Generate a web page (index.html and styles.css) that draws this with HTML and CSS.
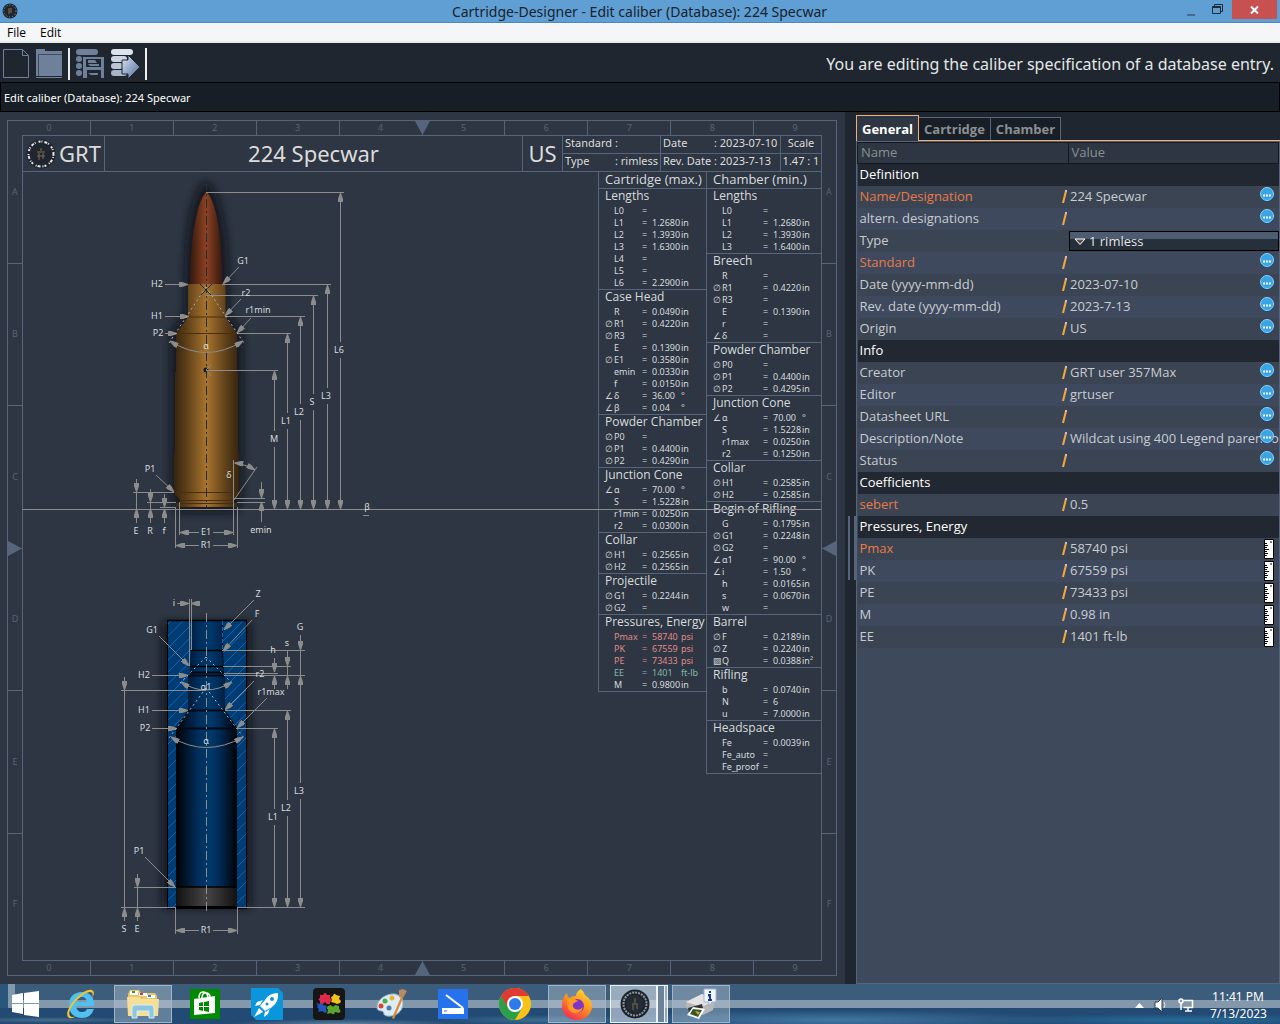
FILE: index.html
```
<!DOCTYPE html>
<html lang="en">
<head>
  <meta charset="UTF-8">
  <title>Cartridge-Designer - Edit caliber (Database): 224 Specwar</title>
  <link rel="stylesheet" href="styles.css">
</head>
<body>
  <header class="titlebar">
    <svg class="app-icon" width="16" height="16" viewBox="0 0 16 16"><circle cx="8" cy="8" r="7.5" fill="#20262e"/><circle cx="8" cy="8" r="6" fill="none" stroke="#9aa0a6" stroke-dasharray="1 2"/><path d="M6 6h4M7 7v4M9 7v3" stroke="#8b7558" fill="none"/></svg>
    <h1>Cartridge-Designer - Edit caliber (Database): 224 Specwar</h1>
    <div class="window-buttons">
      <button aria-label="Minimize"><svg width="10" height="12"><path d="M1 11h8" stroke="#46688a" stroke-width="2"/></svg></button>
      <button aria-label="Restore"><svg width="11" height="11"><path d="M.5 2.5h8v7h-8zM0 3.5h9M2.5 2V.5h8v7H9" fill="none" stroke="#222b35"/></svg></button>
      <button class="close" aria-label="Close"><svg width="9" height="8"><path d="M1 .5l7 7M8 .5l-7 7" stroke="#fff" stroke-width="2"/></svg></button>
    </div>
  </header>

  <nav class="menubar">
    <button>File</button>
    <button>Edit</button>
  </nav>

  <div class="toolbar">
    <button aria-label="New"><svg width="28" height="32"><path d="M1.500 1.500h19l6 6v22h-25zM20.500 1.500v6h6" fill="none" stroke="#6f809a"/></svg></button>
    <button aria-label="Open"><svg width="28" height="32"><path d="M1 1h9v2h17v25H1z" fill="#6f809a"/><path d="M3.500 28V6.500H27" fill="none" stroke="#3f4d60"/><path d="M1 29.500h26" stroke="#6f809a"/></svg></button>
    <i class="sep"></i>
    <button aria-label="Save to database"><svg width="30" height="32"><g fill="#6f809a"><rect x="1" y="1" width="22" height="6" rx="3"/><rect x="1" y="8" width="6" height="6" rx="3"/><rect x="1" y="15" width="6" height="6" rx="3"/><rect x="1" y="22" width="6" height="6" rx="3"/><path d="M8 9h21v21h-3v-8H12v8H8zM11 11v8h15v-8z" fill-rule="evenodd"/><path d="M13 12h7l2 3h-9zM13 16h11v2h-9zM13 25h10v2h-7z"/></g></svg></button>
    <button aria-label="Export"><svg width="30" height="32"><defs><linearGradient id="exp" x2="1" y2="1"><stop offset="0" stop-color="#dfe8f3"/><stop offset="1" stop-color="#46689a"/></linearGradient></defs><rect x="1" y="1" width="22" height="6" rx="3" fill="#dbe3ed"/><rect x="1" y="8" width="16" height="6" rx="3" fill="#ccd5e1"/><rect x="1" y="15" width="12" height="6" rx="3" fill="#bac6d6"/><rect x="1" y="22" width="16" height="6" rx="3" fill="#a7b5ca"/><path d="M12 12h6V7l12 12-12 12v-5h-6z" fill="url(#exp)" stroke="#1f262f"/></svg></button>
    <i class="sep"></i>
    <p>You are editing the caliber specification of a database entry.</p>
  </div>

  <div class="infobar">Edit caliber (Database): 224 Specwar</div>

  <main>
    <section class="drawing">
      <div class="sheet">
        <ol class="ruler top"><li>0</li><li>1</li><li>2</li><li>3</li><li>4</li><li>5</li><li>6</li><li>7</li><li>8</li><li>9</li></ol>
        <ol class="ruler bottom"><li>0</li><li>1</li><li>2</li><li>3</li><li>4</li><li>5</li><li>6</li><li>7</li><li>8</li><li>9</li></ol>
        <ol class="ruler side left"><li>A</li><li>B</li><li>C</li><li>D</li><li>E</li><li>F</li></ol>
        <ol class="ruler side right"><li>A</li><li>B</li><li>C</li><li>D</li><li>E</li><li>F</li></ol>

        <div class="paper">
          <div class="head">
            <div class="brand">
              <svg width="30" height="30" viewBox="0 0 30 30"><circle cx="15" cy="15" r="14.500" fill="#20262f"/><circle cx="15" cy="15" r="12.500" fill="none" stroke="#e6e6e6" stroke-width="2" stroke-dasharray="2 1 1 2 3 1 1 3"/><path d="M11 13h8M13 14v7M17 14v6M11 17h8M15 9v3" stroke="#7d6a55" fill="none"/></svg>
              GRT
            </div>
            <h2>224 Specwar</h2>
            <div class="country">US</div>
            <dl class="meta type">
              <div><dt>Standard</dt><dd>:</dd></div>
              <div><dt>Type</dt><dd>: rimless</dd></div>
            </dl>
            <dl class="meta dates">
              <div><dt>Date</dt><dd>: 2023-07-10</dd></div>
              <div><dt>Rev. Date</dt><dd>: 2023-7-13</dd></div>
            </dl>
            <dl class="meta scale">
              <div><dt>Scale</dt></div>
              <div><dd>1.47 : 1</dd></div>
            </dl>
          </div>
          <div class="content">
            <svg class="plan" width="575" height="788" viewBox="23 172 575 788">
              <defs>
                <linearGradient id="brass"><stop offset="0" stop-color="#35240f"/><stop offset=".2" stop-color="#5e4019"/><stop offset=".5" stop-color="#a8742d"/><stop offset=".8" stop-color="#5e4019"/><stop offset="1" stop-color="#35240f"/></linearGradient>
                <linearGradient id="copper"><stop offset="0" stop-color="#35180f"/><stop offset=".5" stop-color="#8c4222"/><stop offset="1" stop-color="#35180f"/></linearGradient>
                <linearGradient id="bore"><stop offset="0" stop-color="#000205"/><stop offset=".35" stop-color="#002c58"/><stop offset=".55" stop-color="#003a6c"/><stop offset=".7" stop-color="#002c58"/><stop offset="1" stop-color="#000205"/></linearGradient>
                <linearGradient id="steel"><stop offset="0" stop-color="#111"/><stop offset=".5" stop-color="#454545"/><stop offset="1" stop-color="#111"/></linearGradient>
                <pattern id="hatch" width="12" height="12" patternUnits="userSpaceOnUse"><rect width="12" height="12" fill="#003c74"/><path d="M-1 13L13-1" stroke="#0f63b4"/></pattern>
                <filter id="soft" x="-30%" y="-10%" width="160%" height="120%"><feGaussianBlur stdDeviation="4"/></filter>
                <marker id="arrow" viewBox="0 0 9 6" refX="9" refY="3" markerWidth="9" markerHeight="6" markerUnits="userSpaceOnUse" orient="auto-start-reverse"><path d="M0 .5h3L9 2.500v1L3 5.500H0z" fill="#8c8c8c"/></marker>
              </defs>

              <!-- cartridge -->
              <path d="M206 184C192 196 187 240 187 284V314L173 333V490L178 510H236L240 490V333L226 314V284C226 240 220 196 206 184z" fill="#0c1016" stroke="#0c1016" stroke-width="5" opacity=".75" filter="url(#soft)"/>
              <path d="M206.500 192C197 200 190 238 190 285H222.500C222.500 238 216 200 206.500 192z" fill="url(#copper)"/>
              <path d="M188 284H225.500V316.500C228 321 233 328 237 333.500V372H238V453H239V493L234 500V503H237V507H176V503H180V500L174 493V453H175V372H176V333.500C180 328 186 321 188 316.500z" fill="url(#brass)"/>
              <path d="M188 317h37M176 333.500h61M174 492.500h65M180 500.500h54M176 503.500h61" stroke="#4a2e0c" fill="none"/>
              <path d="M206.500 182V509" class="axis dark"/>
              <path d="M200 284l12 12M212 284l-12 12" stroke="#222a35"/>
              <circle cx="206" cy="370" r="2.500" fill="#15181d"/>
              <path d="M206 370l5-5M206 370l5 6" class="dim"/>
              <path d="M22 509.500H821" class="dim"/>

              <path class="dim" d="M206 192.500H344M222 284.500H331M206 295.500H318M225 316.500H305M237 333.500H291M206 370.500H278"/>
              <g class="dim start"><path d="M340.500 193V342"/><path d="M327.500 285V388"/><path d="M313.500 296V394"/><path d="M300.500 317V404"/><path d="M287.500 334V413"/><path d="M274.500 371V431"/></g>
              <g class="dim end"><path d="M340.500 358V509"/><path d="M327.500 404V509"/><path d="M313.500 410V509"/><path d="M300.500 420V509"/><path d="M287.500 429V509"/><path d="M274.500 447V509"/>
                <path d="M165 284.500H188"/><path d="M165 316.500H189"/><path d="M165 333.500H177"/>
                <path d="M239 267L223 284"/><path d="M241 299L225 316"/><path d="M251 318L237 333"/><path d="M156 475L174 492"/>
                <path d="M136.500 479V492"/><path d="M150.500 489V502"/><path d="M164.500 494V507"/><path d="M261.500 482V498"/>
                <path d="M136.500 523V509"/><path d="M150.500 523V509"/><path d="M164.500 523V509"/><path d="M261.500 522V502"/>
                <path d="M199 532.500H180"/><path d="M213 532.500H233"/><path d="M199 545.500H176"/><path d="M213 545.500H237"/>
              </g>
              <path class="dim" d="M136.500 492v17M150.500 502v7M133 492.500h41M147 502.500h29M160 507.500h16M233 498.500h32M237 502.500h28M179.500 502v33M233.500 460v75M175.500 507v41M237.500 507v41M234 500L257 467M363 515.500h6"/>
              <path class="dim both" d="M234.500 463Q245 464 255 470"/>
              <path class="dots" d="M206 287L169 343M206 287L244 343"/>
              <path class="dim both" d="M170 341Q206 364 243 341"/>
              <g class="lbl">
                <text x="157" y="287">H2</text><text x="157" y="319">H1</text><text x="158" y="336">P2</text>
                <text x="243" y="264">G1</text><text x="246" y="296">r2</text><text x="258" y="313">r1min</text>
                <text x="206" y="349">α</text><text x="339" y="353">L6</text><text x="326" y="399">L3</text><text x="312" y="405">S</text>
                <text x="299" y="415">L2</text><text x="286" y="424">L1</text><text x="274" y="442">M</text><text x="367" y="510">β</text>
                <text x="229" y="478">δ</text><text x="150" y="472">P1</text><text x="136" y="534">E</text><text x="150" y="534">R</text><text x="164" y="534">f</text>
                <text x="206" y="535">E1</text><text x="206" y="548">R1</text><text x="261" y="533">emin</text>
              </g>

              <!-- chamber -->
              <path d="M162 622H251V908H162z" fill="#0c1016" opacity=".75" filter="url(#soft)"/>
              <path d="M167 620H247V909H167z" fill="#000"/>
              <path d="M168 621H191V650L190 675H188V710L176 728V908H168z" fill="url(#hatch)"/>
              <path d="M246 621H223V650L224 675H225V710L237 728V908H246z" fill="url(#hatch)"/>
              <path d="M191 621H222V650L224 675H225V710L237 728V887H176V728L188 710V675H190L191 650z" fill="url(#bore)"/>
              <path d="M176 887h61v19h-61z" fill="url(#steel)"/>
              <path d="M167 620.500h80M191 650.500h32M190 666.500h34M176 887h61" stroke="#000" stroke-width="1.500"/>
              <path d="M190 672.500h34M188 675.500h37M188 710.500h37M176 728.500h61" stroke="#000814" stroke-width="2"/>
              <path d="M222.500 621v29" stroke="#0f63b4" stroke-dasharray="4 2"/>
              <path d="M206.500 613V914" class="axis"/>

              <path class="dim" d="M189.500 599v67M191.500 599v51M222 650.500h83M223 666.500h68M224 673.500h54M225 675.500h80M225 710.500h66M237 728.500h41M121 690.500h85M134 887.500h42M121 907.500h55M237 907.500h68M175.500 908v26M237.500 908v26M124.500 690v217M137.500 887v20M300.500 650v25M287.500 666v9"/>
              <g class="dim start"><path d="M300.500 676V783"/><path d="M287.500 711V800"/><path d="M274.500 729V809"/></g>
              <g class="dim end"><path d="M300.500 799V907"/><path d="M287.500 816V907"/><path d="M274.500 825V907"/>
                <path d="M177 603.500H189"/><path d="M199 603.500H191"/>
                <path d="M254 600L224 630"/><path d="M252 620L223 651"/><path d="M159 636L189 666"/>
                <path d="M254 681L225 710"/><path d="M267 698L237 728"/><path d="M145 857L175 887"/>
                <path d="M152 675.500H188"/><path d="M152 710.500H188"/><path d="M152 728.500H177"/>
                <path d="M300.500 635V650"/><path d="M287.500 651V666"/><path d="M274.500 658V672"/><path d="M287.500 689V676"/><path d="M274.500 689V676"/>
                <path d="M124.500 677V690"/><path d="M137.500 874V887"/><path d="M124.500 921V908"/><path d="M137.500 921V908"/>
                <path d="M199 930.500H176"/><path d="M213 930.500H237"/>
              </g>
              <path class="dots" d="M206 657L178 685M206 657L234 685M206 688L169 738M206 688L244 738"/>
              <path class="dim both" d="M181 682Q206 698 232 682"/>
              <path class="dim both" d="M171 737Q206 758 243 737"/>
              <g class="lbl">
                <text x="174" y="606">i</text><text x="258" y="597">Z</text><text x="257" y="617">F</text><text x="300" y="630">G</text><text x="287" y="646">s</text><text x="273" y="653">h</text>
                <text x="152" y="633">G1</text><text x="144" y="678">H2</text><text x="144" y="713">H1</text><text x="145" y="731">P2</text>
                <text x="260" y="677">r2</text><text x="271" y="695">r1max</text><text x="206" y="690">α1</text><text x="206" y="744">α</text>
                <text x="299" y="794">L3</text><text x="286" y="811">L2</text><text x="273" y="820">L1</text>
                <text x="139" y="854">P1</text><text x="124" y="932">S</text><text x="137" y="932">E</text><text x="206" y="933">R1</text>
              </g>
            </svg>
            <div class="spec cartridge" id="cartridge"><h3>Cartridge (max.)</h3></div>
            <div class="spec chamber" id="chamber"><h3>Chamber (min.)</h3></div>
          </div>
        </div>
      </div>
    </section>

    <div class="splitter"></div>

    <aside class="panel">
      <div class="tabs" role="tablist">
        <button role="tab" class="active">General</button>
        <button role="tab">Cartridge</button>
        <button role="tab">Chamber</button>
      </div>
      <div class="grid">
        <table class="props">
          <thead><tr><th>Name</th><th>Value</th></tr></thead>
          <tbody id="props"></tbody>
        </table>
      </div>
    </aside>
  </main>

  <footer class="taskbar">
    <button class="start" aria-label="Start"><svg width="27" height="26"><path d="M0 4l11-2v10H0zM12 2l15-2v12H12zM0 13h11v10L0 21zM12 13h15v13l-15-2z" fill="#fff"/></svg></button>
    <div class="tasks">
      <button aria-label="Internet Explorer"><svg width="32" height="32"><path d="M29 18H11q1 6 6 6 4 0 5-3h7q-3 9-12 9C9 30 4 25 4 17S9 4 17 4s13 6 12 14zM11 14h11q-1-5-5-5t-6 5z" fill="#4fc0f0" fill-rule="evenodd"/><path d="M3 29C-2 22 18-1 27 2q4 2 0 8 2-6-2-6C17 4 1 22 5 28q2 2 6 0-5 4-8 1z" fill="#f4c52c"/></svg></button>
      <button class="open" aria-label="File Explorer"><svg width="34" height="32"><path d="M2 6l2-4h9l2 3h14l2 3v19H2z" fill="#e8c766"/><path d="M4 3h8v4H4zM13 5h8v3h-8zM21 7h8v3h-8z" fill="#fff"/><path d="M6 3h3v2H6z" fill="#2b9e42"/><path d="M14 5h3v2h-3z" fill="#d33"/><path d="M22 7h3v2h-3z" fill="#38c"/><path d="M1 9h12l2 2h18l-1 17H2z" fill="#f5df96"/><path d="M6 30V20q0-3 3-3h16q3 0 3 3v10h-5v-7H11v7z" fill="#8cc6e0" stroke="#d5eff9"/></svg></button>
      <button aria-label="Store"><svg width="30" height="30"><path d="M0 0h30v30H0z" fill="#008a00"/><path d="M4 10l21-3v17l-21 2z" fill="#fff"/><path d="M9 9q0-6 4-6t5 5M12 9q0-6 5-5 3 1 3 4" fill="none" stroke="#fff" stroke-width="1.500"/><path d="M9 14l4-1v4H9zM14 13l5-1v5h-5zM9 18h4v4l-4-1zM14 18h5v5l-5-1z" fill="#008a00"/></svg></button>
      <button aria-label="Rocket"><svg width="32" height="32"><path d="M0 0h27l5 5v27H5l-5-5z" fill="#0a95dc"/><path d="M27 5q-9 0-13 7l-5 6 6 6 6-5q7-5 6-14zM12 12l-6 2-2 4 5-1zM19 20l-2 6-4 3 1-6zM8 20l-5 9 9-5z" fill="#fff"/><circle cx="21" cy="11" r="2" fill="#0a95dc"/><circle cx="16" cy="16" r="1.500" fill="#0a95dc"/></svg></button>
      <button aria-label="Puzzle"><svg width="32" height="32"><rect width="32" height="32" rx="4" fill="#161616"/><path d="M7 7h3q2-4 4 0h3v3q3 2 0 4v2h-3l-2-2-2 2H7v-3q-3-2 0-3z" fill="#e02a4c"/><path d="M18 9l2-1q1-4 3-1l4 1-1 3q3 2 1 4l-3 1-2-1-4-1 1-2z" fill="#f0c419"/><path d="M3 15l4 1q2-3 3 1l4 1-1 3q2 3-1 4l-3-2-4 1 1-3q-3-2-1-3z" fill="#2057c0"/><path d="M15 18l3-1q2 3 4 0l4 1v3q3 2 0 4l-4-1q-1 4-4 1l-4 1 1-4q-2-2 0-4z" fill="#5aa62b"/></svg></button>
      <button aria-label="Paint"><svg width="32" height="32"><path d="M2 19C2 11 12 5 20 6q8 2 8 9c0 9-8 14-16 13-5-1-2-4-5-5-3 0-5-1-5-4z" fill="#dcebf5" stroke="#8fb4cc"/><circle cx="6" cy="18" r="2.500" fill="#d8432e"/><circle cx="10" cy="13" r="2.500" fill="#4cae3d"/><circle cx="17" cy="10" r="2.500" fill="#e8b52a"/><circle cx="14" cy="20" r="2.500" fill="#4a7fa5"/><path d="M17 30L26 9l2 1-9 21z" fill="#e08a2a"/><path d="M24 9l0-7 4-1 4 2-4 7z" fill="#b98a60"/></svg></button>
      <button aria-label="Scanner"><svg width="30" height="30"><path d="M0 0h30v30H0z" fill="#2672ec"/><path d="M8 6l17 13" stroke="#fff" stroke-width="2"/><path d="M4 19h22v6H4z" fill="#fff"/><path d="M6 22h3" stroke="#2672ec"/></svg></button>
      <button aria-label="Chrome"><svg width="32" height="32"><circle cx="16" cy="16" r="16" fill="#fbc116"/><path d="M2.100 8A16 16 0 0 0 16 32l7-12-7-4z" fill="#2aa148"/><path d="M2.100 8L9 20l7-4 0-8h13.900A16 16 0 0 0 2.100 8z" fill="#df3b30"/><circle cx="16" cy="16" r="8" fill="#fff"/><circle cx="16" cy="16" r="6" fill="#2d7bea"/></svg></button>
      <button class="open" aria-label="Firefox"><svg width="32" height="32"><defs><linearGradient id="fox" x1=".8" x2=".2" y2="1"><stop offset="0" stop-color="#ffe12e"/><stop offset=".5" stop-color="#ff8a1c"/><stop offset="1" stop-color="#f5225f"/></linearGradient></defs><path d="M20 1q3 3 4 6 7 5 7 11a15 14 0 0 1-30 0Q1 9 6 5q0 3 2 5 3-2 7-2 0-4 5-7z" fill="url(#fox)"/><circle cx="16" cy="18" r="7" fill="#8035c9"/><path d="M6 11q6-2 11 2l-4 2q-3 3 1 6 5 2 8-2-2 7-9 6-8-2-7-14z" fill="#ff9a22"/></svg></button>
      <button class="open stack" aria-label="Cartridge-Designer"><svg width="30" height="30"><circle cx="15" cy="15" r="14.500" fill="#1c232b"/><circle cx="15" cy="15" r="11.500" fill="none" stroke="#8f969c" stroke-width="2" stroke-dasharray="2 1"/><circle cx="15" cy="15" r="9" fill="#242c35"/><path d="M12 15h6M15 9v5M13 16v5M17 16v4" stroke="#806d56"/></svg></button>
      <button class="open" aria-label="Printer"><svg width="34" height="32"><path d="M2 14l16-8 13 6-2 10-10 5L2 20z" fill="#b8b8b8"/><path d="M2 14l16-8 13 6-13 7z" fill="#e3e3e3"/><path d="M4 20l14-4 1 4-14 5z" fill="#333"/><path d="M9 19l12 2-6 10-12-4z" fill="#fff"/><path d="M9 21l9 1-4 7-8-3z" fill="#315a26"/><path d="M11 23l5 1-2 3z" fill="#e69a3a"/><path d="M20 1h12v13h-4l-3 4v-4h-5z" fill="#f2f6ff" stroke="#9fb4d8"/><path d="M26 3v2M24 7h2v5M24 12h4" stroke="#1237a8" stroke-width="2"/></svg></button>
    </div>
    <div class="tray">
      <svg width="9" height="5"><path d="M0 5l4.500-5L9 5z" fill="#fff"/></svg>
      <svg width="14" height="16"><path d="M1 5h3l4-4v14l-4-4H1z" fill="#fff" stroke="#2c3e50"/><path d="M10 5q2 3 0 6" stroke="#dfe6ee" fill="none"/></svg>
      <svg width="16" height="16"><path d="M5.500 3.500h9v7h-9M10 11v3M7 14h7" fill="none" stroke="#fff" stroke-width="1.500"/><circle cx="3" cy="4" r="2" fill="none" stroke="#fff" stroke-width="1.500"/><path d="M3 6v7" stroke="#fff" stroke-width="1.500"/></svg>
      <div class="clock"><time>11:41 PM</time><time>7/13/2023</time></div>
    </div>
  </footer>

  <script src="script.js"></script>
</body>
</html>
```
FILE: styles.css
```
* { box-sizing: border-box; margin: 0; padding: 0; }
html, body { height: 100%; }
body { display: flex; flex-direction: column; min-height: 1024px; font-family: "Noto Sans", "Open Sans", sans-serif; font-size: 13px; color: #c8ccd0; background: #1f262f; overflow: hidden; }
button { font: inherit; color: inherit; background: none; border: 0; }
svg { display: block; flex: none; }
ol { list-style: none; }

/* window chrome */
.titlebar { display: flex; align-items: center; height: 23px; background: #5f9fd3; border-bottom: 1px solid #4a88bd; color: #17222e; }
.app-icon { margin: 0 2px; }
.titlebar h1 { flex: 1; padding-left: 82px; text-align: center; font-size: 14px; font-weight: 400; }
.window-buttons { display: flex; align-self: flex-start; height: 19px; margin-right: 3px; }
.window-buttons button { display: flex; justify-content: center; align-items: center; width: 27px; }
.window-buttons .close { width: 45px; margin-left: 1px; background: #c75050; }

.menubar { display: flex; height: 20px; background: #f5f6f8; border-bottom: 2px solid #e9ede9; color: #000; font: 12px "Open Sans", "Noto Sans", sans-serif; line-height: 20px; }
.menubar button { padding: 0 7px; }

.toolbar { display: flex; align-items: center; gap: 5px; height: 39px; padding: 2px 6px 0 2px; background: #1f262f; }
.toolbar .sep { width: 2px; height: 32px; background: #eee; }
.toolbar p { flex: 1; text-align: right; font-size: 16px; color: #e4e6e8; }
.infobar { height: 30px; padding-left: 3px; border: 1px solid #000; background: #181e25; color: #fff; font-size: 11px; line-height: 29px; }

main { flex: 1; display: grid; grid-template-columns: minmax(0, 1fr) 11px 424px; min-height: 0; }

/* drawing sheet */
.drawing { padding: 8px 8px 8px 7px; background: #2d3642; }
.sheet { display: grid; grid-template: 14px 1fr 14px / 14px 1fr 14px; height: 100%; border: 1px solid #56657b; }
.ruler { display: flex; font-size: 9px; line-height: 14px; color: #56657b; text-align: center; position: relative; }
.ruler li { flex: 1; }
.ruler li + li { border-left: 1px solid #56657b; }
.ruler.top { grid-area: 1 / 1 / 2 / 4; }
.ruler.bottom { grid-area: 3 / 1 / 4 / 4; }
.ruler.side { flex-direction: column; }
.ruler.side li { display: flex; align-items: center; justify-content: center; }
.ruler.side li + li { border-left: 0; border-top: 1px solid #56657b; }
.ruler.left { grid-area: 1 / 1 / 4 / 2; }
.ruler.right { grid-area: 1 / 3 / 4 / 4; }
.ruler::after { content: ""; position: absolute; background: #56657b; }
.ruler.top::after, .ruler.bottom::after { left: calc(50% - 7px); width: 15px; height: 14px; }
.ruler.side::after { top: calc(50% - 7px); width: 14px; height: 15px; }
.ruler.top::after { clip-path: polygon(0 0, 100% 0, 50% 100%); }
.ruler.bottom::after { clip-path: polygon(0 100%, 100% 100%, 50% 0); }
.ruler.left::after { clip-path: polygon(0 0, 100% 50%, 0 100%); }
.ruler.right::after { clip-path: polygon(100% 0, 0 50%, 100% 100%); }
.paper { grid-area: 2 / 2 / 3 / 3; display: flex; flex-direction: column; border: 1px solid #56657b; min-width: 0; min-height: 0; }

.head { display: flex; height: 36px; border-bottom: 1px solid #56657b; color: #dcdcdc; font-size: 22px; line-height: 35px; }
.head > * + * { border-left: 1px solid #56657b; }
.brand { display: flex; align-items: center; gap: 3px; width: 81px; padding-left: 3px; }
.head h2 { flex: 1; text-align: center; font-size: 22px; font-weight: 400; }
.country { width: 40px; text-align: center; }
.meta { font-size: 11px; line-height: 14px; }
.meta > div { display: flex; height: 17px; padding-left: 2px; }
.meta > div + div { height: 18px; border-top: 1px solid #56657b; }
.meta.type { width: 98px; }
.meta.type dt { width: 50px; }
.meta.dates { width: 120px; }
.meta.dates dt { width: 51px; }
.meta.scale { width: 41px; }
.meta.scale > div { justify-content: center; padding: 0; white-space: nowrap; }

.content { flex: 1; display: flex; min-height: 0; }
.plan { overflow: visible; position: relative; margin-right: auto; }
.dim { stroke: #8c8c8c; fill: none; }
.dim.start path { marker-start: url(#arrow); }
.dim.end path { marker-end: url(#arrow); }
.dim.both { marker-start: url(#arrow); marker-end: url(#arrow); }
.dots { stroke: #b4b4b4; fill: none; stroke-dasharray: 2 3; }
.axis { stroke: #8c8c8c; stroke-dasharray: 9 3 2 3; }
.axis.dark { stroke: #222b38; }
.lbl { font-size: 9px; fill: #d8dbde; text-anchor: middle; }

.spec { align-self: flex-start; border-left: 1px solid #56657b; border-bottom: 1px solid #56657b; color: #d8dbde; }
.spec.cartridge { width: 108px; }
.spec.chamber { width: 115px; }
.spec h3, .spec caption { padding-left: 6px; font-family: "Open Sans", "Noto Sans", sans-serif; font-weight: 400; text-align: left; white-space: nowrap; }
.spec h3 { height: 16px; font-size: 13px; line-height: 15px; }
.spec caption { height: 17px; border-top: 1px solid #56657b; font-size: 12px; line-height: 13px; }
.spec table { width: 100%; table-layout: fixed; border-collapse: collapse; font-size: 9px; line-height: 12px; }
.spec td { height: 12px; white-space: nowrap; }
.spec td:nth-child(1) { width: 15px; padding-left: 6px; }
.spec td:nth-child(2) { width: 28px; }
.spec td:nth-child(3) { width: 10px; }
.spec td:nth-child(4) { width: 29px; }
.spec.chamber td:nth-child(2) { width: 41px; }
.pressure td { color: #e08a8a; }
.energy td { color: #7fb8a8; }

.splitter { display: flex; align-items: center; padding-left: 3px; background: #1f262f; }
.splitter::before { content: ""; width: 5px; height: 64px; border: solid #56657b; border-width: 0 2px; }

/* property panel */
.panel { display: flex; flex-direction: column; padding-top: 3px; min-width: 0; font-family: "Open Sans", "Noto Sans", sans-serif; }
.tabs { display: flex; align-items: flex-end; height: 26px; border-bottom: 1px solid #f3ae70; }
.tabs button { height: 23px; padding: 0 5px; border: 1px solid #56657b; border-bottom: 0; background: #181e25; color: #8b8f93; font-weight: 700; }
.tabs button + button { margin-left: -1px; }
.tabs .active { height: 26px; margin-bottom: -1px; border-color: #f3ae70; background: #2d3642; color: #fff; position: relative; }
.grid { flex: 1; border: 1px solid #56657b; background: #3f495c; }
.props { width: 100%; table-layout: fixed; border-collapse: collapse; }
.props th { height: 21px; padding: 0 0 2px 3px; border: 1px solid #14191f; background: #2d3642; color: #8b8f93; font-weight: 400; line-height: 18px; text-align: left; }
.props td { position: relative; height: 22px; padding: 0 0 2px 2px; line-height: 20px; vertical-align: top; white-space: nowrap; overflow: hidden; background: #3a4452; }
.props .alt td { background: #3e495d; }
.props .group td { background: #222831; color: #fff; }
.props .required td:first-child { color: #e87b48; }
.pencil { position: absolute; right: 1px; top: 4px; }
.props td button { position: absolute; right: 5px; top: 1px; }
.props td.edit { padding: 1px 0 1px 1px; }
.edit select { display: block; width: 100%; height: 20px; padding-left: 19px; border: 1px solid #000; appearance: none; background: linear-gradient(#4d5c70 7px, #25303a 7px); color: #e4e6e8; font: inherit; line-height: 18px; }
.edit svg { position: absolute; left: 6px; top: 8px; }

/* taskbar */
.taskbar { display: flex; align-items: center; height: 40px; background: linear-gradient(90deg, #2a567c 8px, #8498ac 8px, #8498ac 15px, transparent 15px) 0 0 / 100% 24px no-repeat, linear-gradient(#3b5c7a 16px, #8498ac 16px, #8498ac 24px, transparent 24px), radial-gradient(ellipse at 4% 90%, #4a708c, transparent 6%), radial-gradient(ellipse at 27% 100%, #5c7f9b, transparent 9%), radial-gradient(ellipse at 42% 90%, #3d6d94, transparent 10%), radial-gradient(ellipse at 65% 90%, #4078a2, transparent 20%), radial-gradient(ellipse at 92% 90%, #256c9c, transparent 12%), #234a72; }
.start { padding: 0 13px 0 12px; }
.tasks { display: flex; gap: 4px; }
.tasks button { display: flex; align-items: center; justify-content: center; width: 58px; height: 38px; }
.tasks .open { border: 1px solid #a3b4c4; background: rgba(190, 205, 218, .4); }
.tasks .stack { position: relative; padding-right: 8px; border-color: #eef3f7; background: rgba(215, 225, 235, .6); }
.stack::after { content: ""; position: absolute; top: 0; bottom: 0; right: 2px; width: 6px; border: solid #eef3f7; border-width: 0 1px 0 2px; background: #6c839a; }
.tray { display: flex; align-items: center; gap: 14px; margin-left: auto; padding: 2px 14px 0 0; }
.tray svg { margin-right: -4px; }
.clock { width: 56px; margin-left: 6px; color: #fff; font-size: 12px; line-height: 17px; text-align: center; }
.clock time { display: block; white-space: nowrap; }
```
FILE: script.js
```
// rows: [symbol, name, value, unit, css class]
const cartridge = {
  'Lengths': [['', 'L0'], ['', 'L1', '1.2680', 'in'], ['', 'L2', '1.3930', 'in'], ['', 'L3', '1.6300', 'in'], ['', 'L4'], ['', 'L5'], ['', 'L6', '2.2900', 'in']],
  'Case Head': [['', 'R', '0.0490', 'in'], ['∅', 'R1', '0.4220', 'in'], ['∅', 'R3'], ['', 'E', '0.1390', 'in'], ['∅', 'E1', '0.3580', 'in'], ['', 'emin', '0.0330', 'in'], ['', 'f', '0.0150', 'in'], ['∠', 'δ', '36.00', '°'], ['∠', 'β', '0.04', '°']],
  'Powder Chamber': [['∅', 'P0'], ['∅', 'P1', '0.4400', 'in'], ['∅', 'P2', '0.4290', 'in']],
  'Junction Cone': [['∠', 'α', '70.00', '°'], ['', 'S', '1.5228', 'in'], ['', 'r1min', '0.0250', 'in'], ['', 'r2', '0.0300', 'in']],
  'Collar': [['∅', 'H1', '0.2565', 'in'], ['∅', 'H2', '0.2565', 'in']],
  'Projectile': [['∅', 'G1', '0.2244', 'in'], ['∅', 'G2']],
  'Pressures, Energy': [['', 'Pmax', '58740', 'psi', 'pressure'], ['', 'PK', '67559', 'psi', 'pressure'], ['', 'PE', '73433', 'psi', 'pressure'], ['', 'EE', '1401', 'ft-lb', 'energy'], ['', 'M', '0.9800', 'in']]
};
const chamber = {
  'Lengths': [['', 'L0'], ['', 'L1', '1.2680', 'in'], ['', 'L2', '1.3930', 'in'], ['', 'L3', '1.6400', 'in']],
  'Breech': [['', 'R'], ['∅', 'R1', '0.4220', 'in'], ['∅', 'R3'], ['', 'E', '0.1390', 'in'], ['', 'r'], ['∠', 'δ']],
  'Powder Chamber': [['∅', 'P0'], ['∅', 'P1', '0.4400', 'in'], ['∅', 'P2', '0.4295', 'in']],
  'Junction Cone': [['∠', 'α', '70.00', '°'], ['', 'S', '1.5228', 'in'], ['', 'r1max', '0.0250', 'in'], ['', 'r2', '0.1250', 'in']],
  'Collar': [['∅', 'H1', '0.2585', 'in'], ['∅', 'H2', '0.2585', 'in']],
  'Begin of Rifling': [['', 'G', '0.1795', 'in'], ['∅', 'G1', '0.2248', 'in'], ['∅', 'G2'], ['∠', 'α1', '90.00', '°'], ['∠', 'i', '1.50', '°'], ['', 'h', '0.0165', 'in'], ['', 's', '0.0670', 'in'], ['', 'w']],
  'Barrel': [['∅', 'F', '0.2189', 'in'], ['∅', 'Z', '0.2240', 'in'], ['▨', 'Q', '0.0388', 'in²']],
  'Rifling': [['', 'b', '0.0740', 'in'], ['', 'N', '6'], ['', 'u', '7.0000', 'in']],
  'Headspace': [['', 'Fe', '0.0039', 'in'], ['', 'Fe_auto'], ['', 'Fe_proof']]
};

function renderSpec(id, spec) {
  const box = document.getElementById(id);
  for (const title in spec) {
    const rows = spec[title].map(([sym, name, value = '', unit = '', cls = '']) =>
      `<tr class="${cls}"><td>${sym}</td><td>${name}</td><td>=</td><td>${value}</td><td>${unit}</td></tr>`).join('');
    box.insertAdjacentHTML('beforeend', `<table><caption>${title}</caption>${rows}</table>`);
  }
}
renderSpec('cartridge', cartridge);
renderSpec('chamber', chamber);

const pencil = '<svg class="pencil" width="5" height="14"><path d="M4 1L1 13" stroke="#f0a83c" stroke-width="2"/><path d="M4 0v2" stroke="#d8b8d0" stroke-width="2"/></svg>';
const more = '<button aria-label="Edit"><svg width="14" height="15"><circle cx="7" cy="8" r="7" fill="#1d4d75"/><circle cx="7" cy="7" r="6.500" fill="#3aa5e6" stroke="#8fd0f5"/><path d="M3 8.500h2M6 8.500h2M9 8.500h2" stroke="#fff" stroke-width="2"/></svg></button>';
const units = '<button aria-label="Units"><svg width="10" height="20"><path d="M.5 .5h9v19h-9z" fill="#fff" stroke="#000"/><path d="M1 4.500h2M1 6.500h3M1 8.500h2M1 10.500h4M1 12.500h2M1 14.500h3M1 16.500h2M6 3h2" stroke="#000"/></svg></button>';

// [name, value, button, required]; one item = group heading
const props = [
  ['Definition'],
  ['Name/Designation', '224 Specwar', more, true], ['altern. designations', '', more], ['Type', null],
  ['Standard', '', more, true], ['Date (yyyy-mm-dd)', '2023-07-10', more], ['Rev. date (yyyy-mm-dd)', '2023-7-13', more], ['Origin', 'US', more],
  ['Info'],
  ['Creator', 'GRT user 357Max', more], ['Editor', 'grtuser', more], ['Datasheet URL', '', more],
  ['Description/Note', 'Wildcat using 400 Legend parent or', more], ['Status', '', more],
  ['Coefficients'],
  ['sebert', '0.5', '', true],
  ['Pressures, Energy'],
  ['Pmax', '58740 psi', units, true], ['PK', '67559 psi', units], ['PE', '73433 psi', units], ['M', '0.98 in', units], ['EE', '1401 ft-lb', units]
];

document.getElementById('props').innerHTML = props.map(([name, value, button, required], i) => {
  if (value === undefined) return `<tr class="group"><td colspan="2">${name}</td></tr>`;
  const cls = (i % 2 ? '' : 'alt') + (required ? ' required' : '');
  if (value === null) {
    return `<tr class="${cls}"><td><label for="type">${name}</label></td><td class="edit"><select id="type"><option>1 rimless</option></select><svg width="12" height="8"><path d="M1 1h10L6 6.500z" fill="#555" stroke="#fff"/></svg></td></tr>`;
  }
  return `<tr class="${cls}"><td>${name}${pencil}</td><td>${value}${button}</td></tr>`;
}).join('');
```
